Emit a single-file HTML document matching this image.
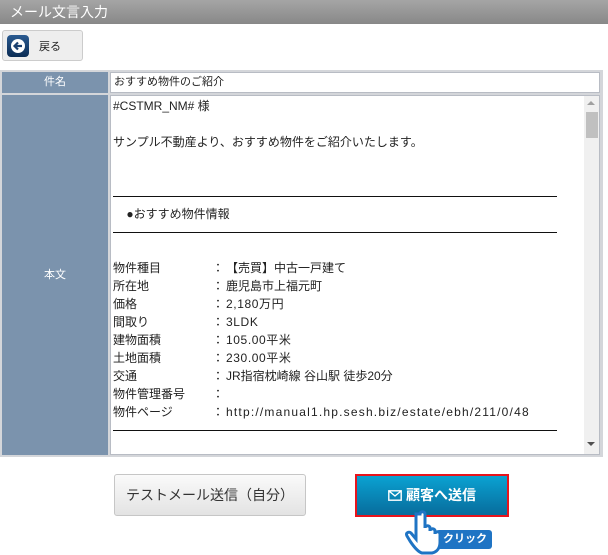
<!DOCTYPE html>
<html><head><meta charset="utf-8"><style>
body{margin:0;width:608px;height:555px;background:#fff;font-family:"Liberation Sans","Noto Sans CJK JP",sans-serif;position:relative;overflow:hidden}
.hdr{position:absolute;left:0;top:0;width:608px;height:24px;background:linear-gradient(#a5a5a5,#888);color:#fff;font-size:14px;line-height:24px;padding-left:10px;box-sizing:border-box}
.back{position:absolute;left:2px;top:30px;width:81px;height:31px;border:1px solid #ccc;border-radius:3px;background:#eee;box-sizing:border-box}
.back .ic{position:absolute;left:4px;top:4px;width:22px;height:22px;border-radius:4px;background:linear-gradient(#2a5a90,#0c2d55)}
.back span{position:absolute;left:36px;top:7px;font-size:11px;color:#222}
.lab{position:absolute;left:2px;background:#7b93ad;color:#fff;font-size:11px;text-align:center;width:106px}
.cell{position:absolute;left:110px;width:490px;background:#fff;border:1px solid #b8bcc4;box-sizing:border-box}
.txt{position:absolute;left:113px;top:97px;font-size:12px;line-height:18px;color:#222}
.row{height:18px;position:relative;white-space:nowrap}
.rule{height:18px;position:relative}
.rule:after{content:"";position:absolute;left:0;width:444px;top:9px;border-top:1px solid #111}
.k{position:absolute;left:0}.c{position:absolute;left:99px}.v{position:absolute;left:113px}
.btn1{position:absolute;left:114px;top:474px;width:192px;height:42px;border:1px solid #c6c6c6;border-radius:3px;background:linear-gradient(#fafafa,#e3e3e3);box-sizing:border-box;font-size:14px;color:#333;text-align:center;line-height:40px}
.btn2{position:absolute;left:355px;top:474px;width:154px;height:43px;border:2px solid #e8141c;background:linear-gradient(#0aa2d2,#086c9c);box-sizing:border-box;color:#fff;font-size:14px;font-weight:bold;text-align:center;line-height:39px}
</style></head><body>
<div class="hdr">メール文言入力</div>
<div class="back"><div class="ic"><svg width="22" height="22"><circle cx="11" cy="11" r="7" fill="#fff"/><path d="M15 11H8M11 7.5L7.5 11 11 14.5" stroke="#1a4070" stroke-width="2.2" fill="none"/></svg></div><span>戻る</span></div>
<div style="position:absolute;left:0;top:70px;width:603px;height:387px;background:#d4d6da"></div>
<div class="lab" style="top:72px;height:21px;line-height:21px">件名</div>
<div class="cell" style="top:72px;height:21px;font-size:11px;line-height:19px;padding-left:3px;color:#222">おすすめ物件のご紹介</div>
<div class="lab" style="top:95px;height:360px;line-height:360px">本文</div>
<div class="cell" style="top:95px;height:360px"></div>
<div style="position:absolute;left:584px;top:96px;width:15px;height:358px;background:#f0f0f0"></div>
<div style="position:absolute;left:586px;top:112px;width:12px;height:26px;background:#c0c0c0"></div>
<div style="position:absolute;left:587px;top:101px;border:4px solid transparent;border-bottom:4px solid #a0a0a0;border-top:0"></div>
<div style="position:absolute;left:587px;top:442px;border:4px solid transparent;border-top:4px solid #505050;border-bottom:0"></div>
<div class="txt">
<div class="row">#CSTMR_NM# 様</div>
<div class="row"></div>
<div class="row">サンプル不動産より、おすすめ物件をご紹介いたします。</div>
<div class="row"></div><div class="row"></div>
<div class="rule"></div>
<div class="row">&nbsp;&nbsp;&nbsp;&nbsp;●おすすめ物件情報</div>
<div class="rule"></div>
<div class="row"></div>
<div class="row"><span class="k">物件種目</span><span class="c">：</span><span class="v">【売買】中古一戸建て</span></div>
<div class="row"><span class="k">所在地</span><span class="c">：</span><span class="v">鹿児島市上福元町</span></div>
<div class="row"><span class="k">価格</span><span class="c">：</span><span class="v" style="letter-spacing:.6px">2,180万円</span></div>
<div class="row"><span class="k">間取り</span><span class="c">：</span><span class="v" style="letter-spacing:.6px">3LDK</span></div>
<div class="row"><span class="k">建物面積</span><span class="c">：</span><span class="v" style="letter-spacing:.6px">105.00平米</span></div>
<div class="row"><span class="k">土地面積</span><span class="c">：</span><span class="v" style="letter-spacing:.6px">230.00平米</span></div>
<div class="row"><span class="k">交通</span><span class="c">：</span><span class="v">JR指宿枕崎線 谷山駅 徒歩20分</span></div>
<div class="row"><span class="k">物件管理番号</span><span class="c">：</span></div>
<div class="row"><span class="k">物件ページ</span><span class="c">：</span><span class="v" style="letter-spacing:1.2px">http://manual1.hp.sesh.biz/estate/ebh/211/0/48</span></div>
<div class="rule"></div>
</div>
<div class="btn1">テストメール送信（自分）</div>
<div class="btn2"><svg width="14" height="11" style="vertical-align:-1px;margin-right:4px"><rect x="0.8" y="0.8" width="12.4" height="9.4" fill="none" stroke="#fff" stroke-width="1.4"/><path d="M1 1l6 5 6-5" fill="none" stroke="#fff" stroke-width="1.4"/></svg>顧客へ送信</div>
<div style="position:absolute;left:436px;top:530px;width:56px;height:19px;background:#1f74c4;border-radius:3px;color:#fff;font-size:11px;font-weight:bold;line-height:19px;text-align:right;padding-right:5px;box-sizing:border-box">クリック</div>
<svg style="position:absolute;left:403px;top:510px" width="42" height="45"><path d="M17 4c0-3 5-3 5 0v14c0-3 5-3 5 0v3c0-3 5-3 5 0v3c0-3 5-3 5 0v8c0 6-3 10-8 11H19c-4-1-8-6-12-12l-3-5c-2-3 2-5 4-3l5 6V4z" fill="#fff" stroke="#1f74c4" stroke-width="3"/></svg>
</body></html>
